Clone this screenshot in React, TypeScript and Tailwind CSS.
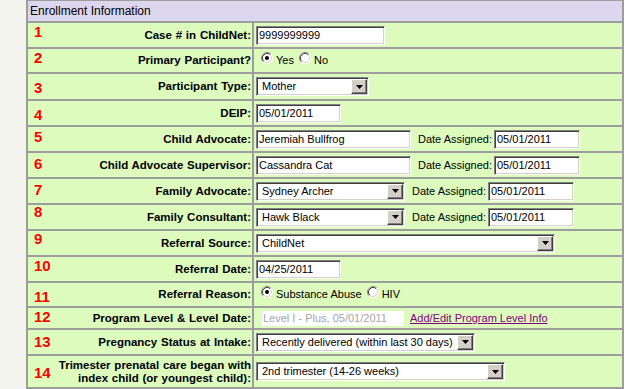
import React from "react"

const inset =
  "border border-t-[#808080] border-l-[#808080] border-b-white border-r-white shadow-[inset_1px_1px_0_#404040,inset_-1px_-1px_0_#d4d0c8]"

function TextBox({ w, value, className = "" }: { w: string; value: string; className?: string }) {
  return (
    <input
      readOnly
      value={value}
      className={`${inset} ${w} ${className} h-[19px] bg-white px-[2px] text-[11px] text-black outline-none`}
    />
  )
}

function Select({ w, value }: { w: string; value: string }) {
  return (
    <div className={`${inset} ${w} h-[19px] bg-white flex items-stretch p-[1px] pl-[5px]`}>
      <span className="flex-1 flex items-center text-[11px] text-black whitespace-nowrap overflow-hidden">{value}</span>
      <span className="w-[16px] bg-[#d4d0c8] border border-t-white border-l-white border-b-[#404040] border-r-[#404040] shadow-[inset_-1px_-1px_0_#808080] flex items-center justify-center">
        <svg width="7" height="4" viewBox="0 0 7 4">
          <path d="M0 0h7L3.5 4z" fill="#000" />
        </svg>
      </span>
    </div>
  )
}

function Radio({ checked }: { checked?: boolean }) {
  return (
    <svg width="12" height="12" viewBox="0 0 12 12" className="ml-[5px] mr-[3px] shrink-0">
      <circle cx="6" cy="6" r="5.5" fill="#fff" />
      <path d="M2.11 9.89A5.5 5.5 0 0 1 9.89 2.11" stroke="#808080" fill="none" />
      <path d="M2.82 9.18A4.5 4.5 0 0 1 9.18 2.82" stroke="#404040" fill="none" />
      <path d="M9.89 2.11A5.5 5.5 0 0 1 2.11 9.89" stroke="#fff" fill="none" />
      <path d="M9.18 2.82A4.5 4.5 0 0 1 2.82 9.18" stroke="#d4d0c8" fill="none" />
      {checked && <circle cx="6" cy="6" r="2" fill="#000" />}
    </svg>
  )
}

function Assigned({ ml }: { ml: string }) {
  return (
    <>
      <span className={`${ml} mr-[2px] text-[11px] text-black`}>Date Assigned:</span>
      <TextBox w="w-[86px]" value="05/01/2011" />
    </>
  )
}

type Row = { n: string; label: React.ReactNode; h: string; nm: string; value: React.ReactNode }

const rows: Row[] = [
  { n: "1", label: "Case # in ChildNet:", h: "h-[24px]", nm: "mt-[1px]", value: <TextBox w="w-[129px]" value="9999999999" /> },
  {
    n: "2",
    label: "Primary Participant?",
    h: "h-[23px]",
    nm: "mt-[1px]",
    value: (
      <div className="flex items-baseline text-[11px] text-black">
        <Radio checked />
        <span>Yes</span>
        <Radio />
        <span>No</span>
      </div>
    ),
  },
  { n: "3", label: "Participant Type:", h: "h-[25px]", nm: "mt-[6px]", value: <Select w="w-[113px]" value="Mother" /> },
  { n: "4", label: "DEIP:", h: "h-[24px]", nm: "mt-[6px]", value: <TextBox w="w-[85px]" value="05/01/2011" /> },
  {
    n: "5",
    label: "Child Advocate:",
    h: "h-[24px]",
    nm: "mt-[2px]",
    value: (
      <>
        <TextBox w="w-[155px]" value="Jeremiah Bullfrog" />
        <Assigned ml="ml-[7px]" />
      </>
    ),
  },
  {
    n: "6",
    label: "Child Advocate Supervisor:",
    h: "h-[24px]",
    nm: "mt-[3px]",
    value: (
      <>
        <TextBox w="w-[155px]" value="Cassandra Cat" />
        <Assigned ml="ml-[7px]" />
      </>
    ),
  },
  {
    n: "7",
    label: "Family Advocate:",
    h: "h-[24px]",
    nm: "mt-[3px]",
    value: (
      <>
        <Select w="w-[149px]" value="Sydney Archer" />
        <Assigned ml="ml-[7px]" />
      </>
    ),
  },
  {
    n: "8",
    label: "Family Consultant:",
    h: "h-[24px]",
    nm: "mt-[-1px]",
    value: (
      <>
        <Select w="w-[149px]" value="Hawk Black" />
        <Assigned ml="ml-[7px]" />
      </>
    ),
  },
  { n: "9", label: "Referral Source:", h: "h-[24px]", nm: "mt-[0px]", value: <Select w="w-[299px]" value="ChildNet" /> },
  { n: "10", label: "Referral Date:", h: "h-[24px]", nm: "mt-[1px]", value: <TextBox w="w-[85px]" value="04/25/2011" /> },
  {
    n: "11",
    label: "Referral Reason:",
    h: "h-[23px]",
    nm: "mt-[6px]",
    value: (
      <div className="flex items-baseline text-[11px] text-black">
        <Radio checked />
        <span>Substance Abuse</span>
        <Radio />
        <span>HIV</span>
      </div>
    ),
  },
  {
    n: "12",
    label: "Program Level & Level Date:",
    h: "h-[20px]",
    nm: "mt-[1px]",
    value: (
      <>
        <span className="ml-[6px] w-[142px] h-[15px] bg-white pl-[1px] flex items-center text-[11px] text-[#a6a6a6]">
          Level I - Plus, 05/01/2011
        </span>
        <a href="#" className="ml-[6px] text-[11px] text-[#800080] underline">
          Add/Edit Program Level Info
        </a>
      </>
    ),
  },
  {
    n: "13",
    label: "Pregnancy Status at Intake:",
    h: "h-[24px]",
    nm: "mt-[4px]",
    value: <Select w="w-[219px]" value="Recently delivered (within last 30 days)" />,
  },
  {
    n: "14",
    label: (
      <>
        Trimester prenatal care began with
        <br />
        index child (or youngest child):
      </>
    ),
    h: "h-[31px]",
    nm: "mt-[9px]",
    value: <Select w="w-[249px]" value="2nd trimester (14-26 weeks)" />,
  },
]

export default function App() {
  return (
    <div className="w-[627px] h-[389px] overflow-hidden bg-[#f4f4ef] flex font-['Liberation_Sans',Arial,sans-serif]">
      <div className="w-[26px] shrink-0" />
      <div className="w-[598px] shrink-0 self-start bg-[#9d9d9d] px-[2px] pt-[1px] pb-[2px] flex flex-col gap-[2px]">
        <div className="h-[20px] bg-[#dcd6ef] px-[2px] flex items-center text-[12px] text-black">Enrollment Information</div>
        {rows.map((r) => (
          <div key={r.n} className={`grid grid-cols-[224px_1fr] gap-[2px] ${r.h}`}>
            <div className="bg-[#ddfbbd] flex justify-between pl-[6px] pr-[1px]">
              <span className={`text-[15px] leading-[16px] font-bold text-[#ff0000] self-start ${r.nm}`}>{r.n}</span>
              <span className="self-center text-right text-[11.5px] [word-spacing:0.6px] leading-[13px] font-bold text-black">
                {r.label}
              </span>
            </div>
            <div className="bg-[#ddfbbd] flex items-center pl-[2px]">{r.value}</div>
          </div>
        ))}
      </div>
      <div className="flex-1 bg-white" />
    </div>
  )
}
